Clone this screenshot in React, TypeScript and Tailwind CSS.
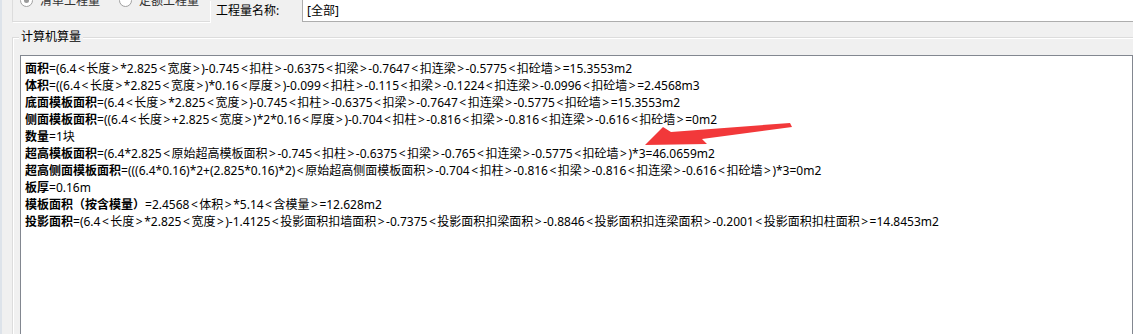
import React from "react";

const lines: [string, string][] = [
  ["面积", "=(6.4<长度>*2.825<宽度>)-0.745<扣柱>-0.6375<扣梁>-0.7647<扣连梁>-0.5775<扣砼墙>=15.3553m2"],
  ["体积", "=((6.4<长度>*2.825<宽度>)*0.16<厚度>)-0.099<扣柱>-0.115<扣梁>-0.1224<扣连梁>-0.0996<扣砼墙>=2.4568m3"],
  ["底面模板面积", "=(6.4<长度>*2.825<宽度>)-0.745<扣柱>-0.6375<扣梁>-0.7647<扣连梁>-0.5775<扣砼墙>=15.3553m2"],
  ["侧面模板面积", "=((6.4<长度>+2.825<宽度>)*2*0.16<厚度>)-0.704<扣柱>-0.816<扣梁>-0.816<扣连梁>-0.616<扣砼墙>=0m2"],
  ["数量", "=1块"],
  ["超高模板面积", "=(6.4*2.825<原始超高模板面积>-0.745<扣柱>-0.6375<扣梁>-0.765<扣连梁>-0.5775<扣砼墙>)*3=46.0659m2"],
  ["超高侧面模板面积", "=(((6.4*0.16)*2+(2.825*0.16)*2)<原始超高侧面模板面积>-0.704<扣柱>-0.816<扣梁>-0.816<扣连梁>-0.616<扣砼墙>)*3=0m2"],
  ["板厚", "=0.16m"],
  ["模板面积（按含模量）", "=2.4568<体积>*5.14<含模量>=12.628m2"],
  ["投影面积", "=(6.4<长度>*2.825<宽度>)-1.4125<投影面积扣墙面积>-0.7375<投影面积扣梁面积>-0.8846<投影面积扣连梁面积>-0.2001<投影面积扣柱面积>=14.8453m2"],
];

function Rest({ text }: { text: string }) {
  const parts = text.split(/([<>])/);
  return (
    <>
      {parts.map((p, i) =>
        p === "<" || p === ">" ? (
          <span key={i} className="px-[1.5px]">
            {p}
          </span>
        ) : (
          <span key={i}>{p}</span>
        )
      )}
    </>
  );
}

function Radio({ label, checked }: { label: string; checked?: boolean }) {
  return (
    <div className="flex items-center gap-[7px]">
      <div className="w-[13px] h-[13px] rounded-full border border-[#a0a0a0] bg-white flex items-center justify-center">
        {checked && <div className="w-[5px] h-[5px] rounded-full bg-[#9a9a9a]" />}
      </div>
      <span className="text-[#333]">{label}</span>
    </div>
  );
}

export default function App() {
  return (
    <div
      className="relative w-[1133px] h-[334px] overflow-hidden bg-[#f0f0f0] border-l-2 border-[#dde3ea] text-[12px] text-black"
      style={{ fontFamily: '"Noto Sans", "Noto Sans CJK SC", sans-serif' }}
    >
      {/* top row */}
      <div className="flex h-[22px]">
        <div className="ml-[10px] w-[198px] h-[22px] border-l border-b border-[#dcdcdc] shadow-[1px_1px_0_#ffffff] overflow-hidden">
          <div className="flex items-center gap-[19px] pl-[7px] -mt-[6px] h-[13px]">
            <Radio label="清单工程量" checked />
            <Radio label="定额工程量" />
          </div>
        </div>
        <div className="ml-[6px] w-[86px] h-[21px] flex items-center leading-[16px]">工程量名称:</div>
        <div className="flex-1 h-[22px] bg-white border-l border-b border-[#adadad] pl-[4px] flex items-center leading-[16px]">
          [全部]
        </div>
      </div>

      {/* group box */}
      <div className="relative ml-[10px] mt-[15px] h-[400px] border-t border-l border-[#dcdcdc] shadow-[inset_1px_1px_0_#ffffff] pl-[7px] pt-[17px]">
        <span className="absolute -top-[9px] left-[6px] bg-[#f0f0f0] px-[2px] leading-[16px]">计算机算量</span>
        <div className="h-[400px] bg-white border border-[#828790] pl-[4px] pt-[4px] leading-[17px] whitespace-nowrap">
          {lines.map(([label, rest], i) => (
            <div key={i}>
              <span className="font-bold">{label}</span>
              <Rest text={rest} />
            </div>
          ))}
        </div>
      </div>

      {/* red arrow annotation */}
      <svg className="absolute left-0 top-0 pointer-events-none" width="1133" height="334">
        <polygon
          points="643,145 661,127 669,132 788,123 790,127 700,139 705,144"
          fill="#f2383a"
        />
      </svg>
    </div>
  );
}
